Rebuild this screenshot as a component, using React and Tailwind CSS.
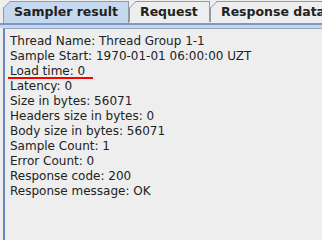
import React from 'react';

const lines = [
  'Thread Name: Thread Group 1-1',
  'Sample Start: 1970-01-01 06:00:00 UZT',
  'Load time: 0',
  'Latency: 0',
  'Size in bytes: 56071',
  'Headers size in bytes: 0',
  'Body size in bytes: 56071',
  'Sample Count: 1',
  'Error Count: 0',
  'Response code: 200',
  'Response message: OK',
];

const Corner = ({ fill }) => (
  <svg className="absolute -left-px -top-px" width="8" height="8" viewBox="0 0 8 8">
    <polygon points="0,0 7,0 0,7" fill="#eeeeee" />
    <line x1="0" y1="7.5" x2="7.5" y2="0" stroke="#8e9aaa" strokeWidth="1" />
    <polygon points="1,8 8,1 8,8" fill={fill} />
  </svg>
);

const Tab = ({ label, selected, width }) => (
  <div
    className={
      'relative shrink-0 flex items-center pl-[10px] border-l border-t border-r border-[#8e9aaa] font-bold text-[12.5px] ' +
      (selected ? 'h-[22px] bg-[#c6d8ee] z-10' : 'h-[21px] bg-[#eeeeee]')
    }
    style={{ width }}
  >
    <Corner fill={selected ? '#c6d8ee' : '#eeeeee'} />
    <span className="relative whitespace-nowrap">{label}</span>
  </div>
);

export default function App() {
  return (
    <div
      className="flex flex-col w-full min-w-[322px] h-screen min-h-[200px] overflow-hidden bg-[#eeeeee] text-[#222222]"
      style={{ fontFamily: '"DejaVu Sans", sans-serif' }}
    >
      <div className="flex items-start pt-[1px] pl-[3px] h-[23px] shrink-0">
        <Tab label="Sampler result" selected width={126} />
        <Tab label="Request" width={81} />
        <Tab label="Response data" width={130} />
      </div>
      <div className="h-[2px] shrink-0 bg-[#7b98cf]" />
      <div className="h-[3px] shrink-0 bg-[#c6d8ee]" />
      <div className="flex-1 ml-[3px] border-l-2 border-t border-l-[#6a86c0] border-t-[#9aa6b4] bg-[#eeeeee] pl-[5px] pt-[5px]">
        <div className="relative text-[12px] leading-[15px]">
          {lines.map((l) => (
            <div key={l} className="whitespace-nowrap">{l}</div>
          ))}
          <div className="absolute left-[-2px] top-[43px] w-[85px] h-[2px] bg-[#ff0000]" />
        </div>
      </div>
    </div>
  );
}
